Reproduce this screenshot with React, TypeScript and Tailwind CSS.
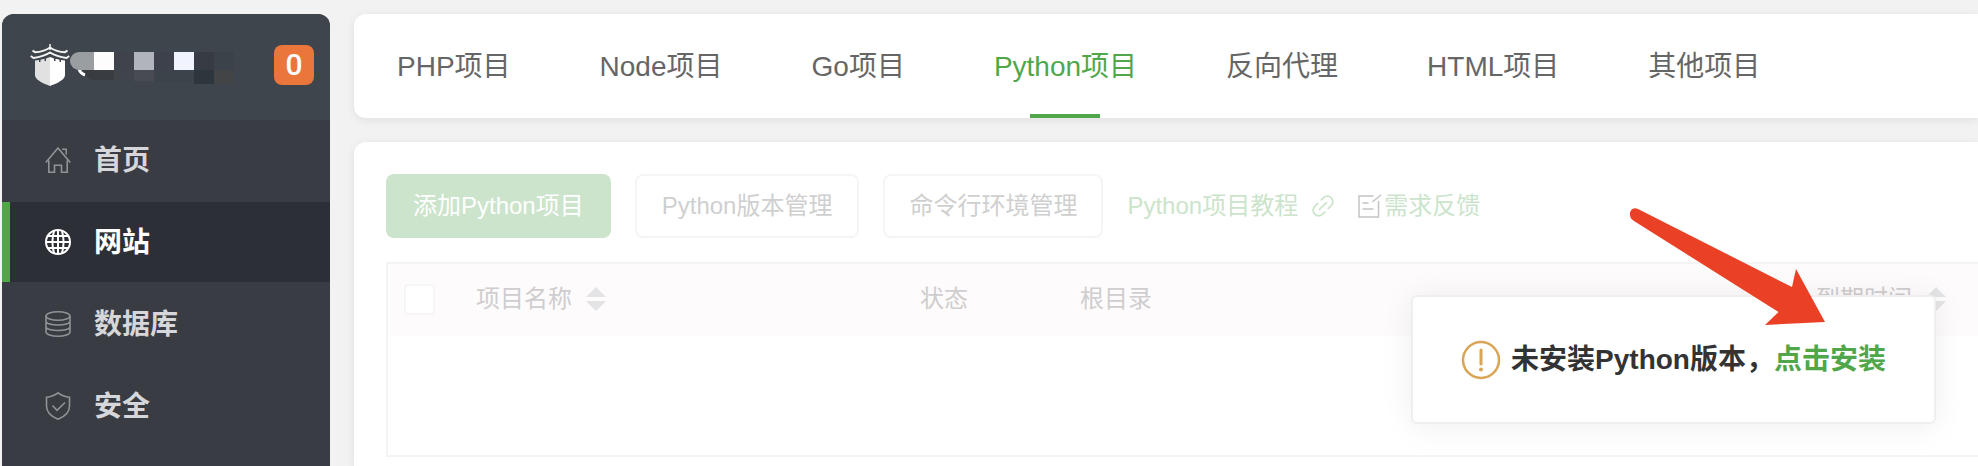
import React from 'react';
import clsx from 'clsx';

const tabs = ['PHP项目', 'Node项目', 'Go项目', 'Python项目', '反向代理', 'HTML项目', '其他项目'];

const HomeIcon = () => (
    <svg width="26" height="26" viewBox="0 0 26 26" fill="none" stroke="currentColor" strokeWidth="1.6">
        <path d="M.8 15.5 13 1l12.2 14.5M3.8 13.5V25.2H9.5V18.3H16.5V25.2H22.2V13.5M17 2.2H21.2V7.5" />
    </svg>
);

const GlobeIcon = () => (
    <svg width="26" height="26" viewBox="0 0 26 26" fill="none" stroke="currentColor" strokeWidth="2">
        <circle cx="13" cy="13" r="12" />
        <path d="M13 1v24M1 13h24M3 7h20M3 19h20M9 2C7 9 7 17 9 24M17 2c2 7 2 15 0 22" />
    </svg>
);

const DatabaseIcon = () => (
    <svg width="26" height="26" viewBox="0 0 26 26" fill="none" stroke="currentColor" strokeWidth="1.6">
        <ellipse cx="13" cy="5" rx="12" ry="4.2" />
        <path d="M1 5v16c0 2.3 5.4 4.2 12 4.2S25 23.3 25 21V5M1 11c2 2 7 3 12 3s10-1 12-3M1 16.5c2 2 7 3 12 3s10-1 12-3" />
    </svg>
);

const ShieldIcon = () => (
    <svg width="26" height="28" viewBox="0 0 26 28" fill="none" stroke="currentColor" strokeWidth="1.6">
        <path d="M13 .8C9.5 3.5 5.5 4.800 1.5 5.2V14c0 6 4.5 10.5 11.5 13.2C20 24.5 24.5 20 24.5 14V5.2C20.5 4.8 16.5 3.5 13 .8Z" />
        <path d="m7.5 13.5 4.5 4.8 8-7.8" />
    </svg>
);

const menu = [
    { label: '首页', icon: HomeIcon },
    { label: '网站', icon: GlobeIcon },
    { label: '数据库', icon: DatabaseIcon },
    { label: '安全', icon: ShieldIcon },
];

const Logo = () => (
    <svg width="40" height="42" viewBox="0 0 40 42">
        <g fill="none" stroke="#f4f4f4" strokeWidth="2">
            <path d="M2.5 6.500 5 8.200C11 8 16 6.200 20 3.500c4 2.700 9 4.500 15 4.700l2.500-1.700" />
            <path d="M.8 12 3.500 14C10 13 15 11.500 20 8.500c5 3 10 4.500 16.500 5.500l2.700-2" />
            <path d="M20 0v6" strokeWidth="1.5" />
        </g>
        <path d="M5 16.5 9 16v2h1.500v-2.300l4-.9v2.200H16v-2.500l4-1.500V42C12 39 5 35.500 5 31Z" fill="#e1e1e1" />
        <path d="M35 16.5 31 16v2h-1.500v-2.300l-4-.9v2.200H24v-2.500L20 13V42c8-3 15-6.500 15-11Z" fill="#fff" />
    </svg>
);

// server address hidden behind mosaic blocks
const MaskedAddress = () => (
    <svg width="168" height="36" viewBox="0 0 168 36" className="mt-1.5" shapeRendering="crispEdges">
        <path d="M9 19c1 3 3 5 6 6" stroke="#fff" strokeWidth="3" fill="none" shapeRendering="auto" />
        <path d="M24 2H9a9 9 0 0 0 0 18h15Z" fill="#9b9ea1" shapeRendering="auto" />
        <path d="M14 20h30v10H24c-5 0-8-4-10-10Z" fill="#393c41" shapeRendering="auto" />
        <rect x="24" y="2" width="20" height="18" fill="#fdfdfe" />
        <rect x="44" y="2" width="20" height="18" fill="#40434c" />
        <rect x="64" y="2" width="20" height="18" fill="#b1b4bd" />
        <rect x="84" y="2" width="20" height="18" fill="#3c414b" />
        <rect x="104" y="2" width="20" height="18" fill="#f1f4fe" />
        <rect x="124" y="2" width="20" height="18" fill="#363b44" />
        <rect x="144" y="2" width="20" height="18" fill="#3c424a" />
        <rect x="44" y="20" width="20" height="10" fill="#40444b" />
        <rect x="64" y="20" width="20" height="11" fill="#484b53" />
        <rect x="84" y="20" width="40" height="12" fill="#3d434a" />
        <rect x="124" y="20" width="20" height="14" fill="#2d353d" />
        <rect x="144" y="20" width="20" height="14" fill="#424446" />
    </svg>
);

const LinkIcon = () => (
    <svg width="22" height="22" viewBox="3 3 18 18" fill="none" stroke="#cbe4cb" strokeWidth="1.4" strokeLinecap="round">
        <g transform="rotate(-45 12 12)">
            <path d="M9.5 16.5H7a4.5 4.5 0 0 1 0-9h3.500M14.500 7.500H17a4.500 4.500 0 0 1 0 9h-3.500M8 12h8" />
        </g>
    </svg>
);

const FeedbackIcon = () => (
    <svg width="24" height="24" viewBox="0 0 24 24" fill="none" stroke="#c4c4c4" strokeWidth="1.5">
        <path d="M15.5 2H1v21h19.500V7M4.500 9h6M4.500 15h11M14.500 8 23 .8" />
    </svg>
);

const SortIcon = () => (
    <svg width="20" height="24" viewBox="0 0 20 24" fill="#e4e4e6">
        <path d="m10 0 10 10H0ZM0 14h20L10 24Z" />
    </svg>
);

const WarningIcon = () => (
    <svg width="40" height="40" viewBox="0 0 40 40" fill="none" stroke="#d9a556" strokeWidth="2.5">
        <circle cx="20" cy="20" r="18" />
        <path d="M20 10v14" strokeWidth="3" strokeLinecap="round" />
        <circle cx="20" cy="29.5" r="2" fill="#d9a556" stroke="none" />
    </svg>
);

const Sidebar: React.FC = () => (
    <aside className="w-[328px] shrink-0 rounded-t-xl overflow-hidden bg-[#393c43]">
        <div className="h-[106px] bg-[#3f454c] flex items-center pl-7 pr-4 pb-6 pt-5">
            <Logo />
            <MaskedAddress />
            <span className="ml-auto size-10 shrink-0 rounded-lg bg-[#ea763b] text-white font-[Roboto,sans-serif] text-3xl font-medium flex items-center justify-center">
                0
            </span>
        </div>
        <nav className="flex flex-col gap-0.5">
            {menu.map(({ label, icon: Icon }) => (
                <a
                    key={label}
                    href="#"
                    className={clsx(
                        'h-20 border-l-8 pl-[35px] flex items-center gap-[23px] text-[28px] font-bold',
                        label === '网站'
                            ? 'bg-[#2d2f37] border-[#50a74a] text-white'
                            : 'border-transparent text-[#d5d7da]'
                    )}
                >
                    <span className={label === '网站' ? 'text-white' : 'text-[#909397]'}>
                        <Icon />
                    </span>
                    <span className="pt-0.5">{label}</span>
                </a>
            ))}
        </nav>
    </aside>
);

const ProjectTable: React.FC = () => (
    <table className="w-full table-fixed border-2 border-r-0 border-[#f5f4f5] text-2xl text-[#cfcdce]">
        <thead>
            <tr className="h-[73px] bg-[#fdfbfc] text-left *:font-normal *:pb-0.5">
                <th className="w-[89px] pl-4">
                    <input
                        type="checkbox"
                        aria-label="全选"
                        className="block appearance-none size-[31px] rounded-sm border-2 border-[#f7f6f7] bg-white"
                    />
                </th>
                <th className="w-[444px]">
                    <div className="flex items-center gap-3.5">
                        项目名称
                        <SortIcon />
                    </div>
                </th>
                <th className="w-40">状态</th>
                <th>根目录</th>
                <th className="w-[162px]">
                    <div className="flex items-center gap-3.5">
                        到期时间
                        <SortIcon />
                    </div>
                </th>
            </tr>
        </thead>
        <tbody>
            <tr className="h-[120px]">
                <td colSpan={5}></td>
            </tr>
        </tbody>
    </table>
);

const InstallNotice: React.FC = () => (
    <div className="absolute right-[42px] top-[33px] h-[129px] px-12 flex items-center gap-2.5 rounded-md border-2 border-[#efefef] bg-white text-[28px] font-bold whitespace-nowrap shadow-[0_2px_32px_rgba(60,20,40,0.07)]">
        <WarningIcon />
        <p className="text-[#333]">
            未安装Python版本，
            <a href="#" className="text-[#50a74a]">
                点击安装
            </a>
        </p>
        <svg
            width="200"
            height="120"
            viewBox="0 0 200 120"
            className="absolute right-[109px] -top-[91px]"
            fill="#ea4025"
        >
            <path d="m13 3 154 78 4-18 29 53-60 3 13.5-13L9 15C1 10 6-1 13 3Z" />
        </svg>
    </div>
);

const App: React.FC = () => {
    return (
        <div className="min-h-screen bg-[#f2f2f2] pl-0.5 pt-3.5 flex gap-6 overflow-hidden font-['Liberation_Sans','Noto_Sans_CJK_SC',sans-serif]">
            <Sidebar />
            <main className="flex-1 min-w-0 flex flex-col gap-6">
                <nav className="h-[104px] rounded-l-xl bg-white shadow-[0_2px_10px_rgba(0,0,0,0.08)] flex pl-[43px] gap-[89px] text-[28px] text-[#666] whitespace-nowrap">
                    {tabs.map((tab) => (
                        <a
                            key={tab}
                            href="#"
                            className={clsx('relative flex items-center pt-0.5', tab === 'Python项目' && 'text-[#50a74a]')}
                        >
                            {tab}
                            {tab === 'Python项目' && (
                                <span className="absolute bottom-0 inset-x-0 mx-auto h-1 w-[70px] bg-[#50a74a]" />
                            )}
                        </a>
                    ))}
                </nav>
                <section className="flex-1 rounded-tl-xl bg-white shadow-[0_2px_10px_rgba(0,0,0,0.08)] pl-8 pt-8">
                    <div className="flex items-center text-2xl whitespace-nowrap">
                        <button className="h-16 px-[27px] rounded-lg bg-[#cbe4cb] text-white">添加Python项目</button>
                        <button className="h-16 px-[25px] ml-6 rounded-lg border-2 border-[#f5f5f5] text-[#cfcfcf]">
                            Python版本管理
                        </button>
                        <button className="h-16 px-6 ml-6 rounded-lg border-2 border-[#f5f5f5] text-[#cfcfcf]">
                            命令行环境管理
                        </button>
                        <a href="#" className="ml-6 flex items-center gap-3.5 text-[#cbe4cb]">
                            Python项目教程
                            <LinkIcon />
                        </a>
                        <a href="#" className="ml-6 flex items-center gap-0.5 text-[#cbe4cb]">
                            <FeedbackIcon />
                            需求反馈
                        </a>
                    </div>
                    <div className="relative mt-6">
                        <ProjectTable />
                        <InstallNotice />
                    </div>
                </section>
            </main>
        </div>
    );
};

export default App;
